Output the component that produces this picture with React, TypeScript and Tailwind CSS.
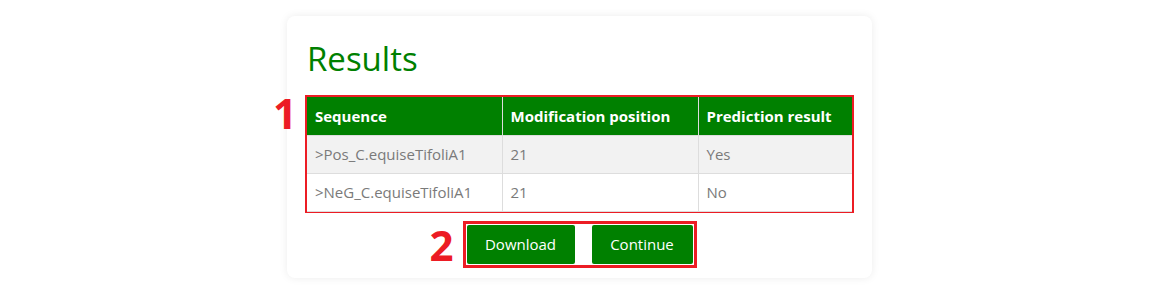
import React from "react";

const rows = [
  { seq: ">Pos_C.equiseTifoliA1", pos: "21", res: "Yes" },
  { seq: ">NeG_C.equiseTifoliA1", pos: "21", res: "No" },
];

export default function App() {
  return (
    <div
      className="w-[1162px] h-[292px] bg-white flex justify-center pt-[16px] pr-[3px]"
      style={{ fontFamily: '"Open Sans", "Noto Sans", sans-serif' }}
    >
      <div className="relative w-[585px] h-[262px] bg-white rounded-[8px] shadow-[0_0_8px_rgba(0,0,0,0.08)] px-[18px] pt-[21px]">
        <h1 className="ml-[2px] text-[33px] leading-[44px] text-[#008000] font-normal">Results</h1>

        <div className="relative mt-[14px] border-2 border-[#ec1c24]">
          <span className="absolute left-[-34px] top-[-6px] text-[42px] leading-[44px] font-bold text-[#ec1c24]">1</span>
          <table className="w-full border-collapse table-fixed text-[15px]">
            <colgroup>
              <col className="w-[195px]" />
              <col className="w-[196px]" />
              <col />
            </colgroup>
            <thead>
              <tr className="bg-[#008000] text-white h-[38px]">
                <th className="text-left font-bold px-[8px] border-r border-[#dddddd]">Sequence</th>
                <th className="text-left font-bold px-[8px] border-r border-[#dddddd]">Modification position</th>
                <th className="text-left font-bold px-[8px]">Prediction result</th>
              </tr>
            </thead>
            <tbody className="text-[#7a7a7a]">
              {rows.map((r, i) => (
                <tr key={i} className={`h-[38px] border-t border-[#dddddd] ${i === 0 ? "bg-[#f2f2f2]" : "bg-white"}`}>
                  <td className="px-[8px] border-r border-[#dddddd]">{r.seq}</td>
                  <td className="px-[8px] border-r border-[#dddddd]">{r.pos}</td>
                  <td className="px-[8px]">{r.res}</td>
                </tr>
              ))}
              <tr className="h-0 border-t border-[#dddddd]" />
            </tbody>
          </table>
        </div>

        <div className="flex justify-center mt-[8px]">
          <div className="relative flex gap-[17px] border-[3px] border-[#ec1c24] p-[1px]">
            <span className="absolute left-[-36px] top-[1px] text-[42px] leading-[40px] font-bold text-[#ec1c24]">2</span>
            <button className="w-[108px] h-[39px] bg-[#008000] text-white text-[15px] rounded-[2px]">Download</button>
            <button className="w-[101px] h-[39px] bg-[#008000] text-white text-[15px] rounded-[2px]">Continue</button>
          </div>
        </div>
      </div>
    </div>
  );
}
